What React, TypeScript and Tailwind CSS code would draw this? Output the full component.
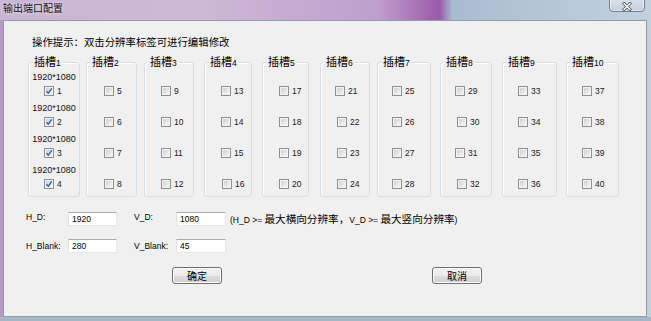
import React from "react";

const LAT = "font-['Liberation_Sans','Noto_Sans_CJK_SC',sans-serif]";
const CJK = "font-['Noto_Sans_CJK_SC',sans-serif]";

type Group = { n: number; w: string; ml: string; pads: string[] };

const groups: Group[] = [
  { n: 1, w: "w-[52px]", ml: "ml-[0px]", pads: ["pl-[15px]", "pl-[15px]", "pl-[15px]", "pl-[15px]"] },
  { n: 2, w: "w-[51px]", ml: "ml-[6px]", pads: ["pl-[17px]", "pl-[17px]", "pl-[17px]", "pl-[17px]"] },
  { n: 3, w: "w-[50px]", ml: "ml-[7px]", pads: ["pl-[16px]", "pl-[16px]", "pl-[16px]", "pl-[16px]"] },
  { n: 4, w: "w-[48px]", ml: "ml-[10px]", pads: ["pl-[16px]", "pl-[16px]", "pl-[16px]", "pl-[17px]"] },
  { n: 5, w: "w-[47px]", ml: "ml-[10px]", pads: ["pl-[16px]", "pl-[16px]", "pl-[16px]", "pl-[16px]"] },
  { n: 6, w: "w-[50px]", ml: "ml-[11px]", pads: ["pl-[14px]", "pl-[16px]", "pl-[16px]", "pl-[16px]"] },
  { n: 7, w: "w-[54px]", ml: "ml-[7px]", pads: ["pl-[14px]", "pl-[14px]", "pl-[14px]", "pl-[14px]"] },
  { n: 8, w: "w-[52px]", ml: "ml-[9px]", pads: ["pl-[14px]", "pl-[16px]", "pl-[14px]", "pl-[16px]"] },
  { n: 9, w: "w-[55px]", ml: "ml-[10px]", pads: ["pl-[15px]", "pl-[15px]", "pl-[15px]", "pl-[15px]"] },
  { n: 10, w: "w-[53px]", ml: "ml-[9px]", pads: ["pl-[15px]", "pl-[15px]", "pl-[15px]", "pl-[15px]"] },
];

function CheckBox({ checked }: { checked?: boolean }) {
  return (
    <span className="relative inline-block w-[10px] h-[10px] shrink-0 border border-[#8e8f8f] bg-[#f4f4f4]">
      <span
        className={
          checked
            ? "absolute inset-[1px] bg-[linear-gradient(135deg,#c6d4e6,#eef3f9)]"
            : "absolute inset-[1px] bg-[linear-gradient(135deg,#cfd1d4,#f5f5f5)]"
        }
      />
      {checked && (
        <svg className="absolute left-[0px] top-[0px]" width="8" height="8" viewBox="0 0 8 8">
          <path d="M1.5 4.2 L3.3 6.2 L6.8 1.3" fill="none" stroke="#3b5da6" strokeWidth="1.4" />
        </svg>
      )}
    </span>
  );
}

function GroupBox({ g }: { g: Group }) {
  const base = (g.n - 1) * 4;
  return (
    <div
      className={`relative ${g.w} ${g.ml} h-[135px] border border-[#d5dfe5] rounded-[3px] shadow-[inset_1px_1px_0_#ffffff] pt-[8px]`}
    >
      <div className="absolute left-[4px] -top-[8px] px-[1px] bg-[#f0f0f0] flex items-baseline leading-[13px] text-black">
        <span className={`${CJK} text-[11px]`}>插槽</span>
        <span className={`${LAT} text-[8.5px]`}>{g.n}</span>
      </div>
      {[0, 1, 2, 3].map((r) => (
        <div key={r} className="h-[31px] flex flex-col">
          <div className={`h-[12px] leading-[12px] text-center ${LAT} text-[9px] text-[#111]`}>
            {g.n === 1 ? "1920*1080" : ""}
          </div>
          <div className={`mt-[2px] h-[12px] flex items-center ${g.pads[r]}`}>
            <CheckBox checked={g.n === 1} />
            <span className={`ml-[3px] ${LAT} text-[8.5px] leading-none text-[#1a1a1a]`}>{base + r + 1}</span>
          </div>
        </div>
      ))}
    </div>
  );
}

function Input({ value, w }: { value: string; w: string }) {
  return (
    <div
      className={`${w} h-[14px] bg-white border border-[#e3e9ef] border-t-[#abadb3] border-l-[#e2e3ea] flex items-center pl-[3px] ${LAT} text-[8.5px] text-black`}
    >
      {value}
    </div>
  );
}

function Button({ label, ml }: { label: string; ml: string }) {
  return (
    <div
      className={`${ml} w-[50px] h-[17px] rounded-[3px] border border-[#707070] bg-[linear-gradient(#f2f2f2_0%,#ebebeb_50%,#dddddd_51%,#cfcfcf_100%)] shadow-[inset_0_0_0_1px_#fbfbfb] flex items-center justify-center ${CJK} text-[10px] text-black`}
    >
      {label}
    </div>
  );
}

export default function App() {
  return (
    <div className="w-[651px] h-[321px] overflow-hidden flex flex-col bg-[linear-gradient(90deg,#c7b6d2_0%,#cdb9d6_30%,#bf9fcd_58%,#a56db3_65%,#9a5aa8_67.5%,#a9bccf_69.5%,#b6c7d8_85%,#c2d1df_100%)] relative">
      {/* title bar */}
      <div className="h-[20px] shrink-0 flex items-start relative">
        <div
          className={`ml-[3px] mt-[2px] ${CJK} text-[10px] leading-[12px] text-[#111] [text-shadow:0_0_4px_rgba(255,255,255,0.9)]`}
        >
          输出端口配置
        </div>
        <div className="absolute left-[609px] -top-[2px] w-[36px] h-[14px] rounded-b-[4px] border border-[#6f7f90] bg-[linear-gradient(#d8e2ec,#c3d0dc)] shadow-[inset_0_0_0_1px_rgba(255,255,255,0.5)] flex items-center justify-center">
          <svg width="10" height="9" viewBox="0 0 10 9" className="mt-[2px]">
            <path d="M2 1.5 L8 7.5 M8 1.5 L2 7.5" stroke="#4b5562" strokeWidth="3" strokeLinecap="square" />
            <path d="M2 1.5 L8 7.5 M8 1.5 L2 7.5" stroke="#ffffff" strokeWidth="1.4" strokeLinecap="square" />
          </svg>
        </div>
      </div>
      <div className="flex-1 flex">
        <div className="w-[3px] bg-[#b79ac6]" />
        <div className="w-[644px] h-[297px] border border-[#8e9aa6] bg-[#f0f0f0] flex flex-col">
          <div className={`mt-[14px] ml-[28px] h-[14px] leading-[14px] ${CJK} text-[10.4px] text-black`}>
            操作提示：双击分辨率标签可进行编辑修改
          </div>
          <div className="mt-[13px] ml-[24px] flex">
            {groups.map((g) => (
              <GroupBox key={g.n} g={g} />
            ))}
          </div>
          {/* row 1 */}
          <div className="mt-[15px] h-[14px] flex items-start">
            <div className={`ml-[22px] w-[42px] leading-[10px] ${LAT} text-[8.5px] text-black`}>H_D:</div>
            <Input value="1920" w="w-[49px]" />
            <div className={`ml-[17px] w-[42px] leading-[10px] ${LAT} text-[8.5px] text-black`}>V_D:</div>
            <Input value="1080" w="w-[50px]" />
            <div className={`ml-[4px] h-[14px] leading-[14px] ${LAT} text-[8.5px] text-black whitespace-pre`}>
              <span>(H_D &gt;= </span>
              <span className={`${CJK} text-[10.6px]`}>最大横向分辨率，</span>
              <span>V_D &gt;= </span>
              <span className={`${CJK} text-[10.6px]`}>最大竖向分辨率</span>
              <span>)</span>
            </div>
          </div>
          {/* row 2 */}
          <div className="mt-[13px] h-[14px] flex items-start">
            <div className={`ml-[22px] mt-[1.5px] w-[42px] leading-[10px] ${LAT} text-[8.5px] text-black`}>H_Blank:</div>
            <Input value="280" w="w-[49px]" />
            <div className={`ml-[17px] mt-[1.5px] w-[42px] leading-[10px] ${LAT} text-[8.5px] text-black`}>V_Blank:</div>
            <Input value="45" w="w-[50px]" />
          </div>
          {/* buttons */}
          <div className="mt-[14px] flex">
            <Button label="确定" ml="ml-[168px]" />
            <Button label="取消" ml="ml-[210px]" />
          </div>
        </div>
        <div className="w-[4px]" />
      </div>
      <div className="h-[4px] shrink-0 bg-[#a6b6c6]" />
    </div>
  );
}
